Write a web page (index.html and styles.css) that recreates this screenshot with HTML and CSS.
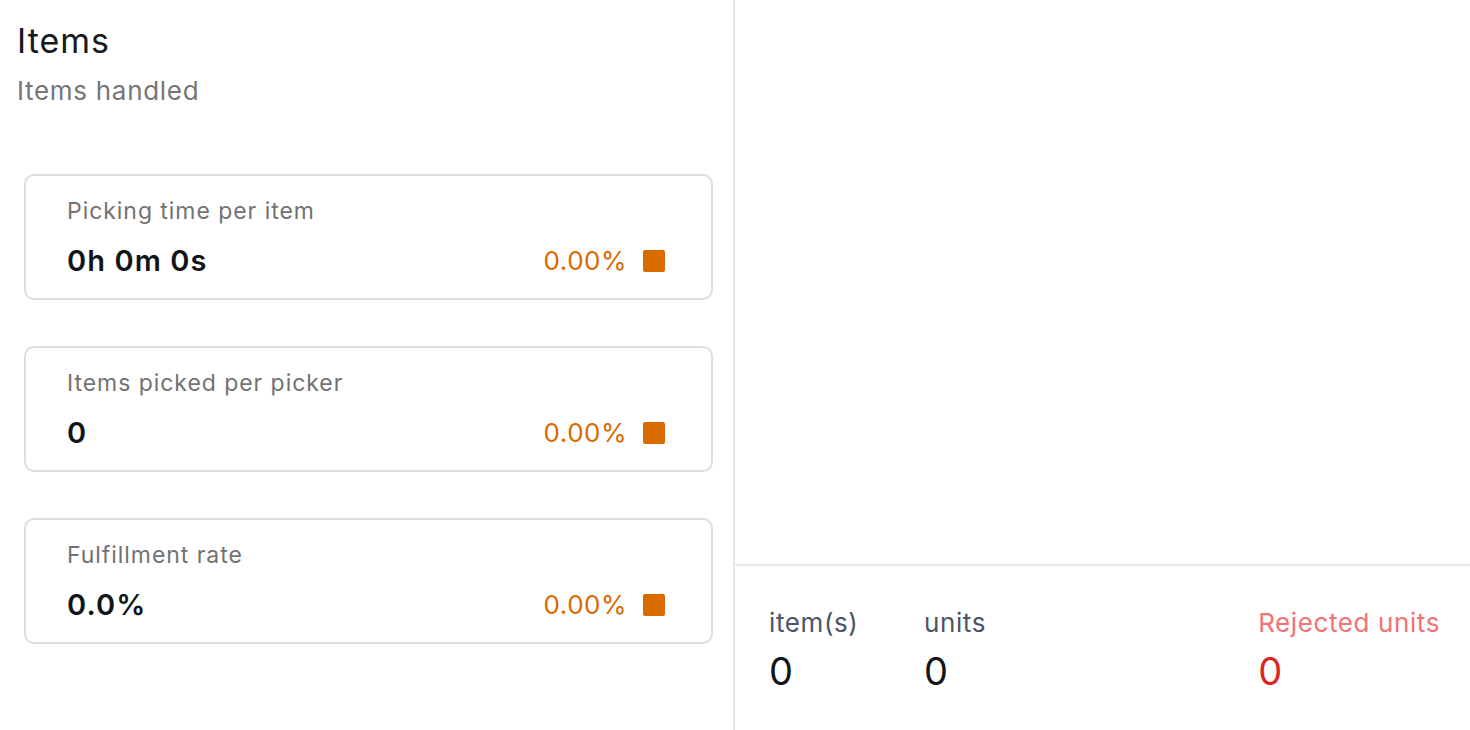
FILE: index.html
```html
<!DOCTYPE html>
<html>
<head>
<meta charset="utf-8">
<link rel="stylesheet" href="styles.css">
</head>
<body>
<div class="page">
  <section class="left">
    <h1 class="title">Items</h1>
    <p class="subtitle">Items handled</p>
    <div class="cards">
      <div class="card">
        <div class="card-label">Picking time per item</div>
        <div class="card-row">
          <span class="card-value">0h 0m 0s</span>
          <span class="card-change">0.00%<span class="swatch"></span></span>
        </div>
      </div>
      <div class="card">
        <div class="card-label">Items picked per picker</div>
        <div class="card-row">
          <span class="card-value">0</span>
          <span class="card-change">0.00%<span class="swatch"></span></span>
        </div>
      </div>
      <div class="card">
        <div class="card-label">Fulfillment rate</div>
        <div class="card-row">
          <span class="card-value">0.0%</span>
          <span class="card-change">0.00%<span class="swatch"></span></span>
        </div>
      </div>
    </div>
  </section>
  <section class="right">
    <div class="chart"></div>
    <div class="totals">
      <div class="stat stat-items">
        <div class="stat-label">item(s)</div>
        <div class="stat-value">0</div>
      </div>
      <div class="stat">
        <div class="stat-label">units</div>
        <div class="stat-value">0</div>
      </div>
      <div class="stat stat-rejected">
        <div class="stat-label">Rejected units</div>
        <div class="stat-value">0</div>
      </div>
    </div>
  </section>
</div>
</body>
</html>
```

FILE: styles.css
```css
* { box-sizing: border-box; }
html, body {
  margin: 0;
  padding: 0;
  background: #ffffff;
  font-family: Inter, "Noto Sans", sans-serif;
  color: #111518;
}
.page {
  display: flex;
  width: 1470px;
  height: 730px;
}
.left {
  width: 735px;
  flex: none;
  border-right: 2px solid #e6e6ea;
  padding: 21px 20px 0 17px;
}
.title {
  margin: 0;
  font-size: 34px;
  line-height: 40px;
  font-weight: 400;
  letter-spacing: 1px;
  color: #161a1d;
}
.subtitle {
  margin: 14px 0 0;
  font-size: 26px;
  line-height: 32px;
  letter-spacing: 0.7px;
  color: #767676;
}
.cards {
  display: flex;
  flex-direction: column;
  gap: 46px;
  margin: 67px 0 0 7px;
}
.card {
  height: 126px;
  border: 2px solid #dedede;
  border-radius: 10px;
  padding: 21px 46px 0 41px;
}
.card-label {
  font-size: 23px;
  line-height: 28px;
  color: #727272;
  letter-spacing: 0.95px;
}
.card-row {
  display: flex;
  align-items: center;
  justify-content: space-between;
  margin-top: 19px;
}
.card-value {
  font-size: 29px;
  line-height: 34px;
  font-weight: 600;
  letter-spacing: 1.1px;
  color: #111518;
}
.card-change {
  display: flex;
  align-items: center;
  gap: 16px;
  font-size: 26px;
  line-height: 34px;
  letter-spacing: 0.5px;
  color: #d96b00;
}
.swatch {
  width: 22px;
  height: 22px;
  border-radius: 2px;
  background: #d96b00;
}
.right {
  flex: 1;
  display: flex;
  flex-direction: column;
}
.chart {
  height: 566px;
  border-bottom: 2px solid #e6e6ea;
}
.totals {
  display: flex;
  padding: 41px 30px 0 34px;
}
.stat-items { width: 155px; }
.stat-rejected { margin-left: auto; }
.stat-label {
  font-size: 26px;
  line-height: 32px;
  letter-spacing: 0.6px;
  color: #4a5568;
}
.stat-value {
  margin-top: 10px;
  font-size: 38px;
  line-height: 44px;
  color: #111518;
}
.stat-rejected .stat-label { color: #f47174; }
.stat-rejected .stat-value { color: #dc2626; }
```
